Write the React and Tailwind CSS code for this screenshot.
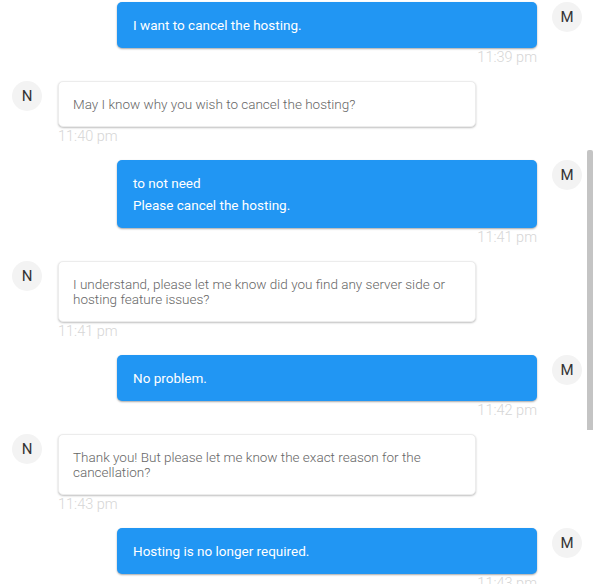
import React from "react";

const msgs = [
  { me: true, lines: ["I want to cancel the hosting."], time: "11:39 pm" },
  { me: false, text: "May I know why you wish to cancel the hosting?", time: "11:40 pm" },
  { me: true, lines: ["to not need", "Please cancel the hosting."], time: "11:41 pm" },
  { me: false, text: "I understand, please let me know did you find any server side or hosting feature issues?", time: "11:41 pm" },
  { me: true, lines: ["No problem."], time: "11:42 pm" },
  { me: false, text: "Thank you! But please let me know the exact reason for the cancellation?", time: "11:43 pm" },
  { me: true, lines: ["Hosting is no longer required."], time: "11:43 pm" },
];

function Avatar({ letter }) {
  return (
    <div className="w-[30px] h-[30px] shrink-0 rounded-full bg-[#f3f3f3] flex items-center justify-center text-[15px] text-[#333]">
      {letter}
    </div>
  );
}

export default function App() {
  return (
    <div className="w-[593px] h-[584px] overflow-hidden bg-white flex" style={{ fontFamily: "Roboto, 'Liberation Sans', sans-serif" }}>
      <div className="flex-1 pt-[2px] flex flex-col">
        {msgs.map((m, i) =>
          m.me ? (
            <div key={i} className="flex justify-end items-start gap-[15px] pr-[5px] mb-[15px]">
              <div className="w-[420px] flex flex-col items-end">
                <div className="w-full bg-[#2196f3] rounded-[5px] px-4 py-3 text-white text-[13.5px] leading-[22px] shadow-[0_1px_2px_rgba(0,0,0,0.35)]">
                  {m.lines.map((l, j) => (
                    <div key={j}>{l}</div>
                  ))}
                </div>
                <div className="mt-[2px] text-[14.5px] leading-[16px] font-light text-[#d6d6d6]">{m.time}</div>
              </div>
              <Avatar letter="M" />
            </div>
          ) : (
            <div key={i} className="flex items-start gap-4 pl-3 mb-[15px]">
              <Avatar letter="N" />
              <div className="w-[418px] flex flex-col items-start">
                <div className="w-full bg-white border border-[#ececec] rounded-[5px] px-[14px] py-[14.5px] text-[#666] font-light text-[13.5px] leading-[15px] shadow-[0_1px_2px_rgba(0,0,0,0.25)]">
                  {m.text}
                </div>
                <div className="mt-[2px] text-[14.5px] leading-[16px] font-light text-[#d6d6d6]">{m.time}</div>
              </div>
            </div>
          )
        )}
      </div>
      <div className="w-[6px] shrink-0 flex flex-col">
        <div className="h-[150px]" />
        <div className="h-[280px] bg-[#c4c4c4] rounded-t-[2px]" />
      </div>
    </div>
  );
}
